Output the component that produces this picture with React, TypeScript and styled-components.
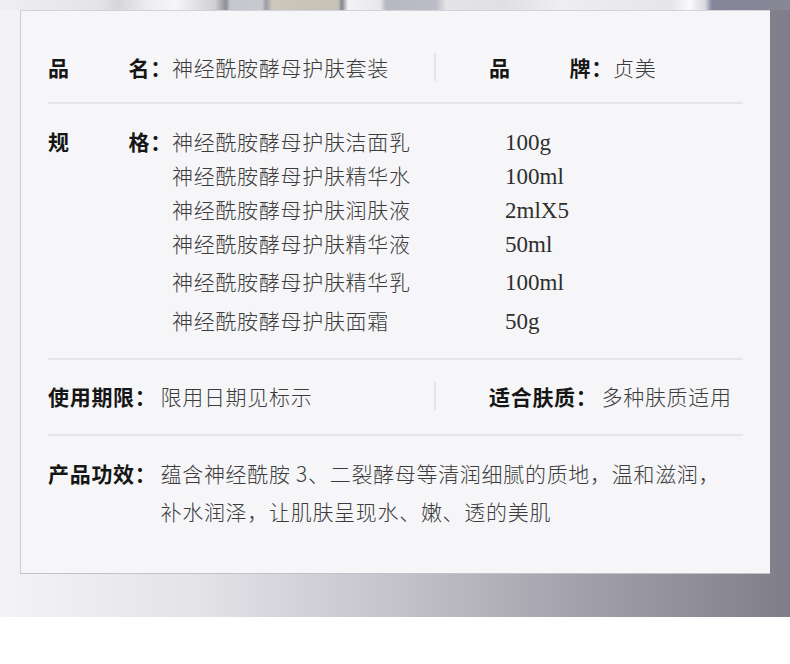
import React from 'react';
import styled, { createGlobalStyle } from 'styled-components';

const Global = createGlobalStyle`
  html, body { margin: 0; padding: 0; background: #ffffff; }
  body { font-family: "Noto Sans CJK SC", "Noto Sans", sans-serif; }
`;

const Backdrop = styled.div`
  height: 617px;
  box-sizing: border-box;
  padding: 10px 20px 0 20px;
  background:
    linear-gradient(
        to right,
        #efeff2 0px, #e4e4e8 100px, #d6d6da 118px, #eeeef0 150px, #f6f6f8 175px, #cfcfd4 215px,
        #8e8e96 226px, #c6c6ce 230px, #c8c8d0 262px, #9a9aa2 266px, #cbc7bc 272px, #c6c2b6 338px,
        #86868e 342px, #f2f2f4 348px, #e8e8ec 380px, #b7b7c2 386px, #bcbcc6 436px, #e4e4e8 446px,
        #e0e0e4 505px, #eeeef1 560px, #e6e6ea 670px, #fafafb 690px, #d8d8de 705px, #86859a 712px,
        #888795 790px
      )
      top left / 100% 10px no-repeat,
    linear-gradient(to right, #f4f4f7 0%, #e3e3e8 25%, #c4c3cb 50%, #a09fa9 75%, #7e7d89 100%);
`;

const Card = styled.div`
  width: 750px;
  height: 564px;
  box-sizing: border-box;
  background: #f6f6f8;
  border-left: 1px solid #cbcbd0;
  border-top: 1px solid #d2d2d8;
  border-bottom: 1px solid #c2c2c8;
  padding: 0 27px 0 27px;
  display: flex;
  flex-direction: column;
  font-size: 21px;
  letter-spacing: 0.7px;
`;

const TwoCol = styled.div<{ $pt: number; $pb: number }>`
  display: grid;
  grid-template-columns: 386px 2px 1fr;
  align-items: center;
  padding: ${(p) => p.$pt}px 0 ${(p) => p.$pb}px;
`;

const VDivider = styled.div`
  width: 2px;
  height: 28px;
  background: #e4e4e7;
`;

const Field = styled.div<{ $indent?: number }>`
  display: flex;
  align-items: flex-start;
  line-height: 34px;
  padding-left: ${(p) => p.$indent ?? 0}px;
  white-space: nowrap;
`;

const Label = styled.div<{ $w?: number }>`
  display: flex;
  justify-content: space-between;
  flex: none;
  width: ${(p) => (p.$w ? `${p.$w}px` : 'auto')};
  margin-right: ${(p) => (p.$w ? 0 : 4)}px;
  font-weight: 700;
  color: #161616;
`;

const Value = styled.div`
  font-weight: 300;
  color: #3c3c3c;
`;

const HLine = styled.div`
  height: 2px;
  background: #e6e6e9;
  flex: none;
`;

const SpecSection = styled.div`
  padding: 20px 0 21px;
`;

const SpecList = styled.div`
  display: flex;
  flex-direction: column;
`;

const SpecRow = styled.div<{ $mt: number }>`
  display: grid;
  grid-template-columns: 333px auto;
  height: 34px;
  margin-top: ${(p) => p.$mt}px;
`;

const Amount = styled.div`
  font-family: "Liberation Serif", "DejaVu Serif", serif;
  font-size: 23px;
  line-height: 30px;
  padding-top: 4px;
  letter-spacing: 0;
  color: #2e2e2e;
`;

const EffectSection = styled.div`
  display: flex;
  align-items: flex-start;
  padding-top: 18px;
  line-height: 38px;
  white-space: nowrap;
`;

const EffectText = styled.div`
  display: flex;
  flex-direction: column;
  font-weight: 300;
  color: #3c3c3c;
`;

const specs = [
  { name: '神经酰胺酵母护肤洁面乳', amount: '100g', mt: 0 },
  { name: '神经酰胺酵母护肤精华水', amount: '100ml', mt: 0 },
  { name: '神经酰胺酵母护肤润肤液', amount: '2mlX5', mt: 0 },
  { name: '神经酰胺酵母护肤精华液', amount: '50ml', mt: 0 },
  { name: '神经酰胺酵母护肤精华乳', amount: '100ml', mt: 4 },
  { name: '神经酰胺酵母护肤面霜', amount: '50g', mt: 5 },
];

export default function App() {
  return (
    <>
      <Global />
      <Backdrop>
        <Card>
          <TwoCol $pt={39} $pb={18}>
            <Field>
              <Label $w={124}>
                <span>品</span>
                <span>名：</span>
              </Label>
              <Value>神经酰胺酵母护肤套装</Value>
            </Field>
            <VDivider />
            <Field $indent={53}>
              <Label $w={124}>
                <span>品</span>
                <span>牌：</span>
              </Label>
              <Value>贞美</Value>
            </Field>
          </TwoCol>
          <HLine />
          <SpecSection>
            <Field>
              <Label $w={124}>
                <span>规</span>
                <span>格：</span>
              </Label>
              <SpecList>
                {specs.map((s) => (
                  <SpecRow key={s.name} $mt={s.mt}>
                    <Value>{s.name}</Value>
                    <Amount>{s.amount}</Amount>
                  </SpecRow>
                ))}
              </SpecList>
            </Field>
          </SpecSection>
          <HLine />
          <TwoCol $pt={19} $pb={21}>
            <Field>
              <Label>使用期限：</Label>
              <Value>限用日期见标示</Value>
            </Field>
            <VDivider />
            <Field $indent={53}>
              <Label>适合肤质：</Label>
              <Value>多种肤质适用</Value>
            </Field>
          </TwoCol>
          <HLine />
          <EffectSection>
            <Label>产品功效：</Label>
            <EffectText>
              <span>蕴含神经酰胺 3、二裂酵母等清润细腻的质地，温和滋润，</span>
              <span>补水润泽，让肌肤呈现水、嫩、透的美肌</span>
            </EffectText>
          </EffectSection>
        </Card>
      </Backdrop>
    </>
  );
}
